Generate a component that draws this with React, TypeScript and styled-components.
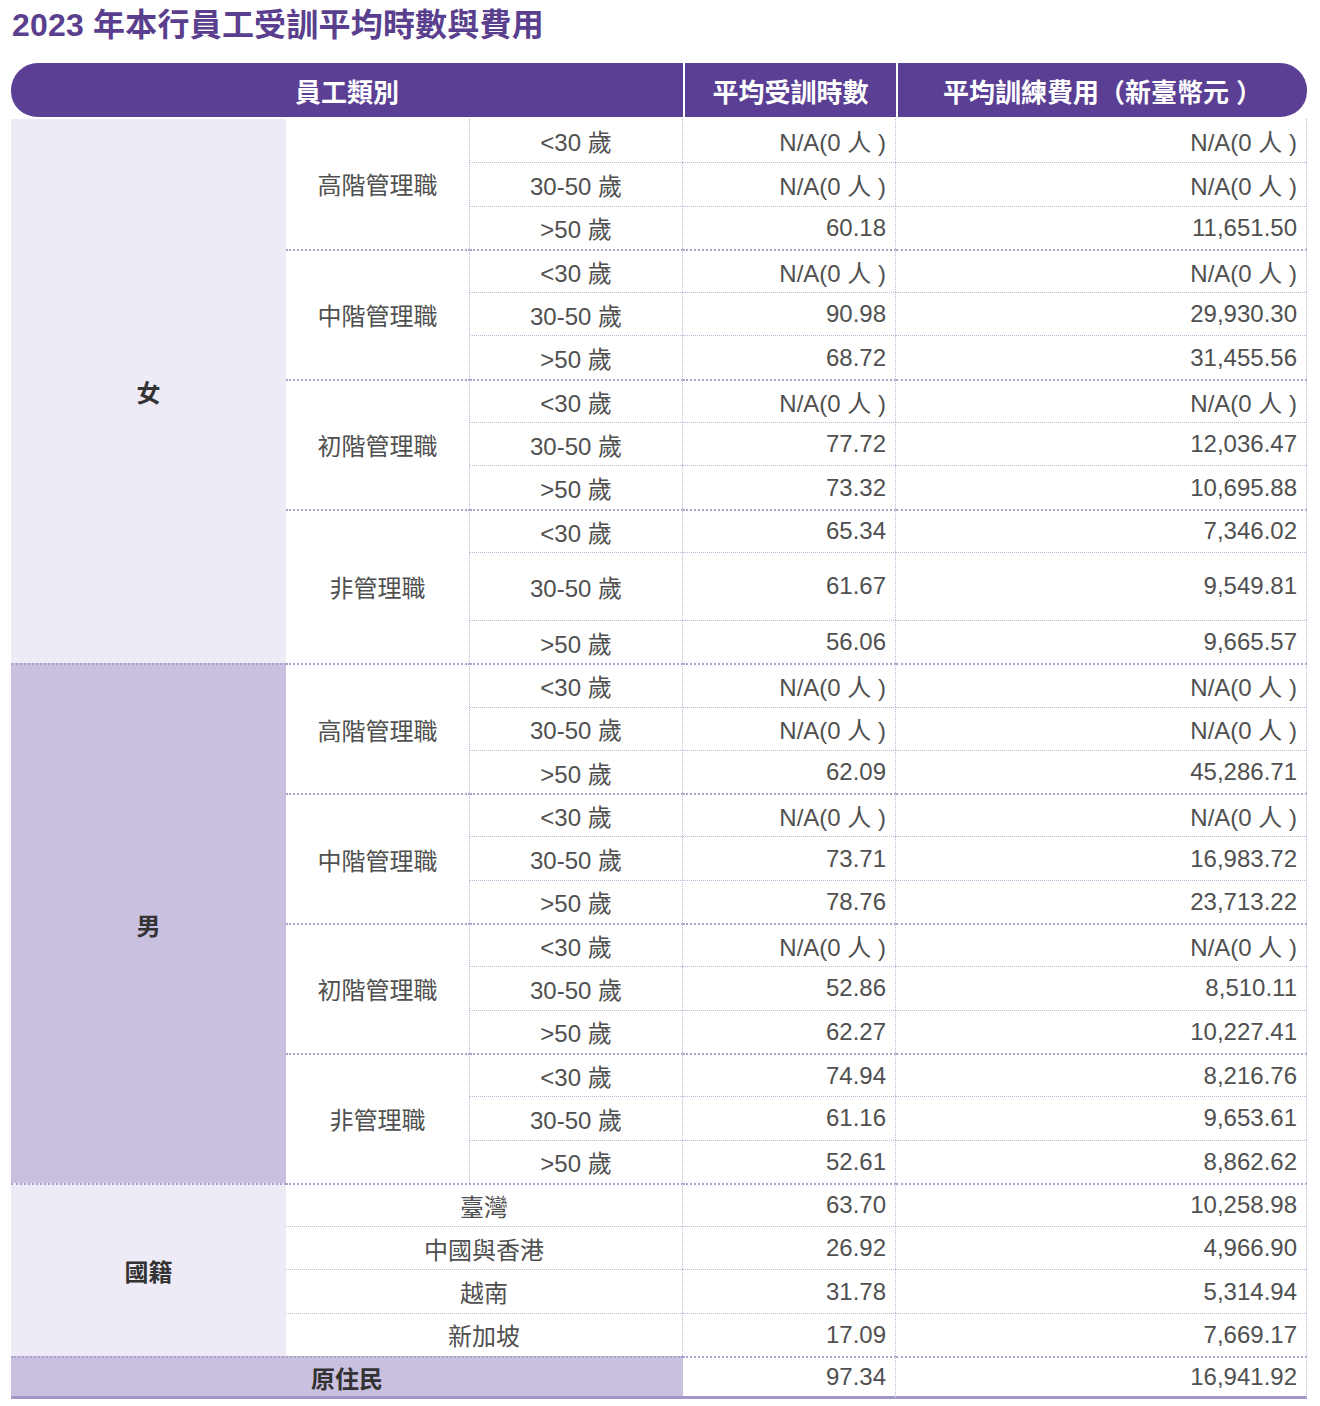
import React from "react"
import styled, { createGlobalStyle, css } from "styled-components"

const GlobalStyle = createGlobalStyle`
  html, body {
    margin: 0;
    padding: 0;
    background: #ffffff;
  }
  body {
    font-family: "Liberation Sans", "Noto Sans CJK TC", sans-serif;
  }
`

const PURPLE = "#5b3f95"
const LIGHT = "#eeebf6"
const DEEP = "#c9c0df"
const ROW_LINE = "1px dotted #bcb6d6"
const GROUP_LINE = "2px dotted #a9a2cb"

type Tone = "light" | "deep"

type AgeRow = { age: string; hours: string; cost: string; tall?: boolean }
type Group = { level: string; rows: AgeRow[] }
type Section = { label: string; tone: Tone; groups: Group[] }

const na = "N/A(0 人 )"

const sections: Section[] = [
  {
    label: "女",
    tone: "light",
    groups: [
      {
        level: "高階管理職",
        rows: [
          { age: "<30 歲", hours: na, cost: na },
          { age: "30-50 歲", hours: na, cost: na },
          { age: ">50 歲", hours: "60.18", cost: "11,651.50" },
        ],
      },
      {
        level: "中階管理職",
        rows: [
          { age: "<30 歲", hours: na, cost: na },
          { age: "30-50 歲", hours: "90.98", cost: "29,930.30" },
          { age: ">50 歲", hours: "68.72", cost: "31,455.56" },
        ],
      },
      {
        level: "初階管理職",
        rows: [
          { age: "<30 歲", hours: na, cost: na },
          { age: "30-50 歲", hours: "77.72", cost: "12,036.47" },
          { age: ">50 歲", hours: "73.32", cost: "10,695.88" },
        ],
      },
      {
        level: "非管理職",
        rows: [
          { age: "<30 歲", hours: "65.34", cost: "7,346.02" },
          { age: "30-50 歲", hours: "61.67", cost: "9,549.81", tall: true },
          { age: ">50 歲", hours: "56.06", cost: "9,665.57" },
        ],
      },
    ],
  },
  {
    label: "男",
    tone: "deep",
    groups: [
      {
        level: "高階管理職",
        rows: [
          { age: "<30 歲", hours: na, cost: na },
          { age: "30-50 歲", hours: na, cost: na },
          { age: ">50 歲", hours: "62.09", cost: "45,286.71" },
        ],
      },
      {
        level: "中階管理職",
        rows: [
          { age: "<30 歲", hours: na, cost: na },
          { age: "30-50 歲", hours: "73.71", cost: "16,983.72" },
          { age: ">50 歲", hours: "78.76", cost: "23,713.22" },
        ],
      },
      {
        level: "初階管理職",
        rows: [
          { age: "<30 歲", hours: na, cost: na },
          { age: "30-50 歲", hours: "52.86", cost: "8,510.11" },
          { age: ">50 歲", hours: "62.27", cost: "10,227.41" },
        ],
      },
      {
        level: "非管理職",
        rows: [
          { age: "<30 歲", hours: "74.94", cost: "8,216.76" },
          { age: "30-50 歲", hours: "61.16", cost: "9,653.61" },
          { age: ">50 歲", hours: "52.61", cost: "8,862.62" },
        ],
      },
    ],
  },
]

const nationality = [
  { name: "臺灣", hours: "63.70", cost: "10,258.98" },
  { name: "中國與香港", hours: "26.92", cost: "4,966.90" },
  { name: "越南", hours: "31.78", cost: "5,314.94" },
  { name: "新加坡", hours: "17.09", cost: "7,669.17" },
]

const Page = styled.div`
  width: 1320px;
  padding: 5px 0 0 11px;
  box-sizing: border-box;
`

const Title = styled.h1`
  margin: 0 0 18px 1px;
  font-size: 32px;
  line-height: 40px;
  font-weight: 700;
  color: #5a3f8e;
  letter-spacing: 0.2px;
`

const Table = styled.table`
  width: 1296px;
  table-layout: fixed;
  border-collapse: separate;
  border-spacing: 0;
  color: #505050;
  font-size: 24px;
`

const Col = styled.col<{ $w: number }>`
  width: ${p => p.$w}px;
`

const HeadCell = styled.th<{ $first?: boolean; $last?: boolean }>`
  height: 54px;
  padding: 0;
  background: ${PURPLE};
  color: #ffffff;
  font-size: 26px;
  font-weight: 700;
  text-align: center;
  vertical-align: middle;
  border-bottom: 2px solid #ffffff;
  border-left: ${p => (p.$first ? "none" : "2px solid #ffffff")};
  border-radius: ${p =>
    p.$first ? "27px 0 0 27px" : p.$last ? "0 27px 27px 0" : "0"};
`

const Row = styled.tr<{ $tall?: boolean }>`
  height: ${p => (p.$tall ? "68px" : "43.3px")};
`

const lineTop = (line?: "row" | "group") =>
  line === "group"
    ? css`border-top: ${GROUP_LINE};`
    : line === "row"
    ? css`border-top: ${ROW_LINE};`
    : css``

const BlockCell = styled.td<{ $tone: Tone; $line?: "group" }>`
  padding: 0;
  background: ${p => (p.$tone === "deep" ? DEEP : LIGHT)};
  color: #333333;
  font-weight: 700;
  text-align: center;
  vertical-align: middle;
  ${p => lineTop(p.$line)}
`

const LabelCell = styled.td<{ $line?: "row" | "group" }>`
  padding: 0;
  text-align: center;
  vertical-align: middle;
  border-right: ${ROW_LINE};
  white-space: nowrap;
  ${p => lineTop(p.$line)}
`

const NumCell = styled.td<{ $line?: "row" | "group" }>`
  padding: 0 9px 0 0;
  text-align: right;
  vertical-align: middle;
  border-right: ${ROW_LINE};
  white-space: nowrap;
  ${p => lineTop(p.$line)}
`

const FootLabel = styled.td`
  padding: 0;
  background: ${DEEP};
  color: #333333;
  font-weight: 700;
  text-align: center;
  vertical-align: middle;
  border-top: ${GROUP_LINE};
  border-bottom: 3px solid #a395c8;
`

const FootNum = styled(NumCell)`
  border-bottom: 3px solid #a395c8;
`

const countRows = (s: Section) =>
  s.groups.reduce((n, g) => n + g.rows.length, 0)

export default function App() {
  return (
    <Page>
      <GlobalStyle />
      <Title>2023 年本行員工受訓平均時數與費用</Title>
      <Table>
        <colgroup>
          <Col $w={275} />
          <Col $w={184} />
          <Col $w={213} />
          <Col $w={213} />
          <Col $w={411} />
        </colgroup>
        <thead>
          <tr>
            <HeadCell colSpan={3} $first>
              員工類別
            </HeadCell>
            <HeadCell>平均受訓時數</HeadCell>
            <HeadCell $last>平均訓練費用（新臺幣元 ）</HeadCell>
          </tr>
        </thead>
        <tbody>
          {sections.map((section, si) =>
            section.groups.map((group, gi) =>
              group.rows.map((row, ri) => {
                const first = si === 0 && gi === 0 && ri === 0
                const line = first ? undefined : ri === 0 ? "group" : "row"
                return (
                  <Row key={`${si}-${gi}-${ri}`} $tall={row.tall}>
                    {gi === 0 && ri === 0 && (
                      <BlockCell
                        rowSpan={countRows(section)}
                        $tone={section.tone}
                        $line={si === 0 ? undefined : "group"}
                      >
                        {section.label}
                      </BlockCell>
                    )}
                    {ri === 0 && (
                      <LabelCell
                        rowSpan={group.rows.length}
                        $line={first ? undefined : "group"}
                      >
                        {group.level}
                      </LabelCell>
                    )}
                    <LabelCell $line={line}>{row.age}</LabelCell>
                    <NumCell $line={line}>{row.hours}</NumCell>
                    <NumCell $line={line}>{row.cost}</NumCell>
                  </Row>
                )
              })
            )
          )}
          {nationality.map((n, i) => (
            <Row key={n.name}>
              {i === 0 && (
                <BlockCell
                  rowSpan={nationality.length}
                  $tone="light"
                  $line="group"
                >
                  國籍
                </BlockCell>
              )}
              <LabelCell colSpan={2} $line={i === 0 ? "group" : "row"}>
                {n.name}
              </LabelCell>
              <NumCell $line={i === 0 ? "group" : "row"}>{n.hours}</NumCell>
              <NumCell $line={i === 0 ? "group" : "row"}>{n.cost}</NumCell>
            </Row>
          ))}
          <Row>
            <FootLabel colSpan={3}>原住民</FootLabel>
            <FootNum $line="group">97.34</FootNum>
            <FootNum $line="group">16,941.92</FootNum>
          </Row>
        </tbody>
      </Table>
    </Page>
  )
}
